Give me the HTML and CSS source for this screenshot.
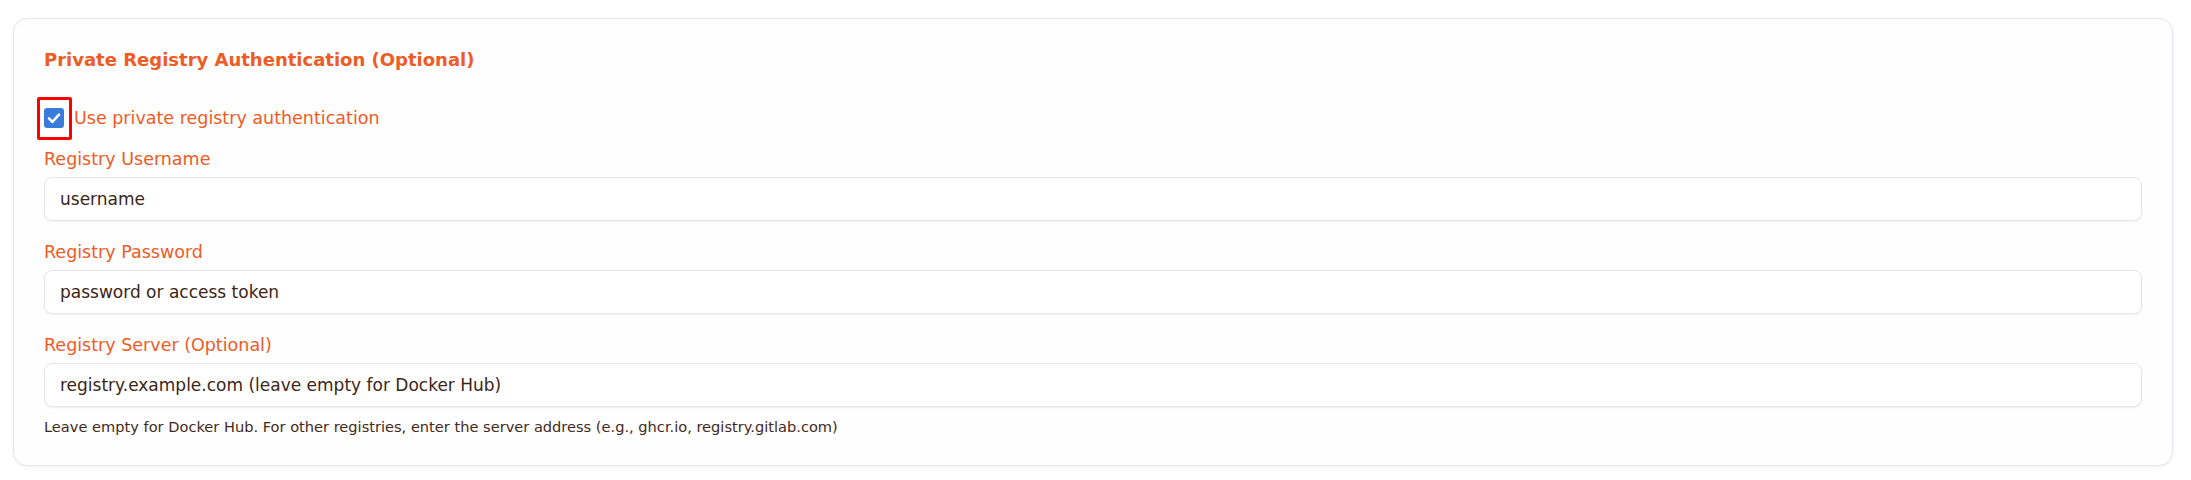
FILE: index.html
```html
<!DOCTYPE html>
<html lang="en">
<head>
<meta charset="utf-8">
<title>Private Registry Authentication</title>
<link rel="stylesheet" href="styles.css">
</head>
<body>
<div class="page">
  <section class="card">
    <h3 class="card-title">Private Registry Authentication (Optional)</h3>
    <div class="fields">
      <label class="check-row">
        <span class="check-box marked">
          <svg viewBox="0 0 20 20" width="20" height="20" aria-hidden="true">
            <rect x="0" y="0" width="20" height="20" rx="3" ry="3" fill="#3a7bdc"/>
            <path d="M5 10.4 L8.4 13.8 L15 6.6" fill="none" stroke="#ffffff" stroke-width="2.6" stroke-linecap="round" stroke-linejoin="round"/>
          </svg>
        </span>
        <span class="check-label">Use private registry authentication</span>
      </label>
      <div class="field">
        <label class="field-label">Registry Username</label>
        <div class="input">username</div>
      </div>
      <div class="field">
        <label class="field-label">Registry Password</label>
        <div class="input">password or access token</div>
      </div>
      <div class="field">
        <label class="field-label">Registry Server (Optional)</label>
        <div class="input">registry.example.com (leave empty for Docker Hub)</div>
        <p class="help">Leave empty for Docker Hub. For other registries, enter the server address (e.g., ghcr.io, registry.gitlab.com)</p>
      </div>
    </div>
  </section>
</div>
</body>
</html>
```

FILE: styles.css
```css
html, body {
  margin: 0;
  padding: 0;
  background: #ffffff;
}

body {
  font-family: "DejaVu Sans", "Liberation Sans", sans-serif;
  color: #3b2517;
}

.page {
  padding: 18px 18px 14px 13px;
}

.card {
  border: 1px solid #e3e6ec;
  border-radius: 14px;
  background: #fefefe;
  box-shadow: 0 1px 3px rgba(15, 23, 42, 0.06);
  padding: 29px 30px 29px 30px;
}

.card-title {
  margin: 0 0 36px 0;
  font-size: 18px;
  line-height: 24px;
  font-weight: 700;
  color: #ef5b25;
}

.fields {
  display: flex;
  flex-direction: column;
  gap: 21px;
}

.check-row {
  display: flex;
  align-items: center;
  gap: 10px;
  height: 20px;
}

.check-box {
  position: relative;
  display: block;
  width: 20px;
  height: 20px;
}

.check-box svg {
  display: block;
}

.check-box.marked::after {
  content: "";
  position: absolute;
  top: -11px;
  left: -7px;
  right: -8px;
  bottom: -12px;
  border: 3px solid #ff0000;
  border-radius: 2px;
}

.check-label {
  font-size: 17.5px;
  line-height: 20px;
  color: #ef5b25;
}

.field {
  display: flex;
  flex-direction: column;
}

.field-label {
  font-size: 17.5px;
  line-height: 20px;
  color: #ef5b25;
  margin-bottom: 8px;
}

.input {
  box-sizing: border-box;
  height: 44px;
  display: flex;
  align-items: center;
  padding: 0 15px;
  border: 1px solid #e3e6ec;
  border-radius: 8px;
  background: #ffffff;
  box-shadow: 0 1px 2px rgba(15, 23, 42, 0.06);
  font-size: 17px;
  color: #3b2517;
}

.help {
  margin: 11px 0 0 0;
  font-size: 14.6px;
  line-height: 18px;
  color: #43291c;
}
```
